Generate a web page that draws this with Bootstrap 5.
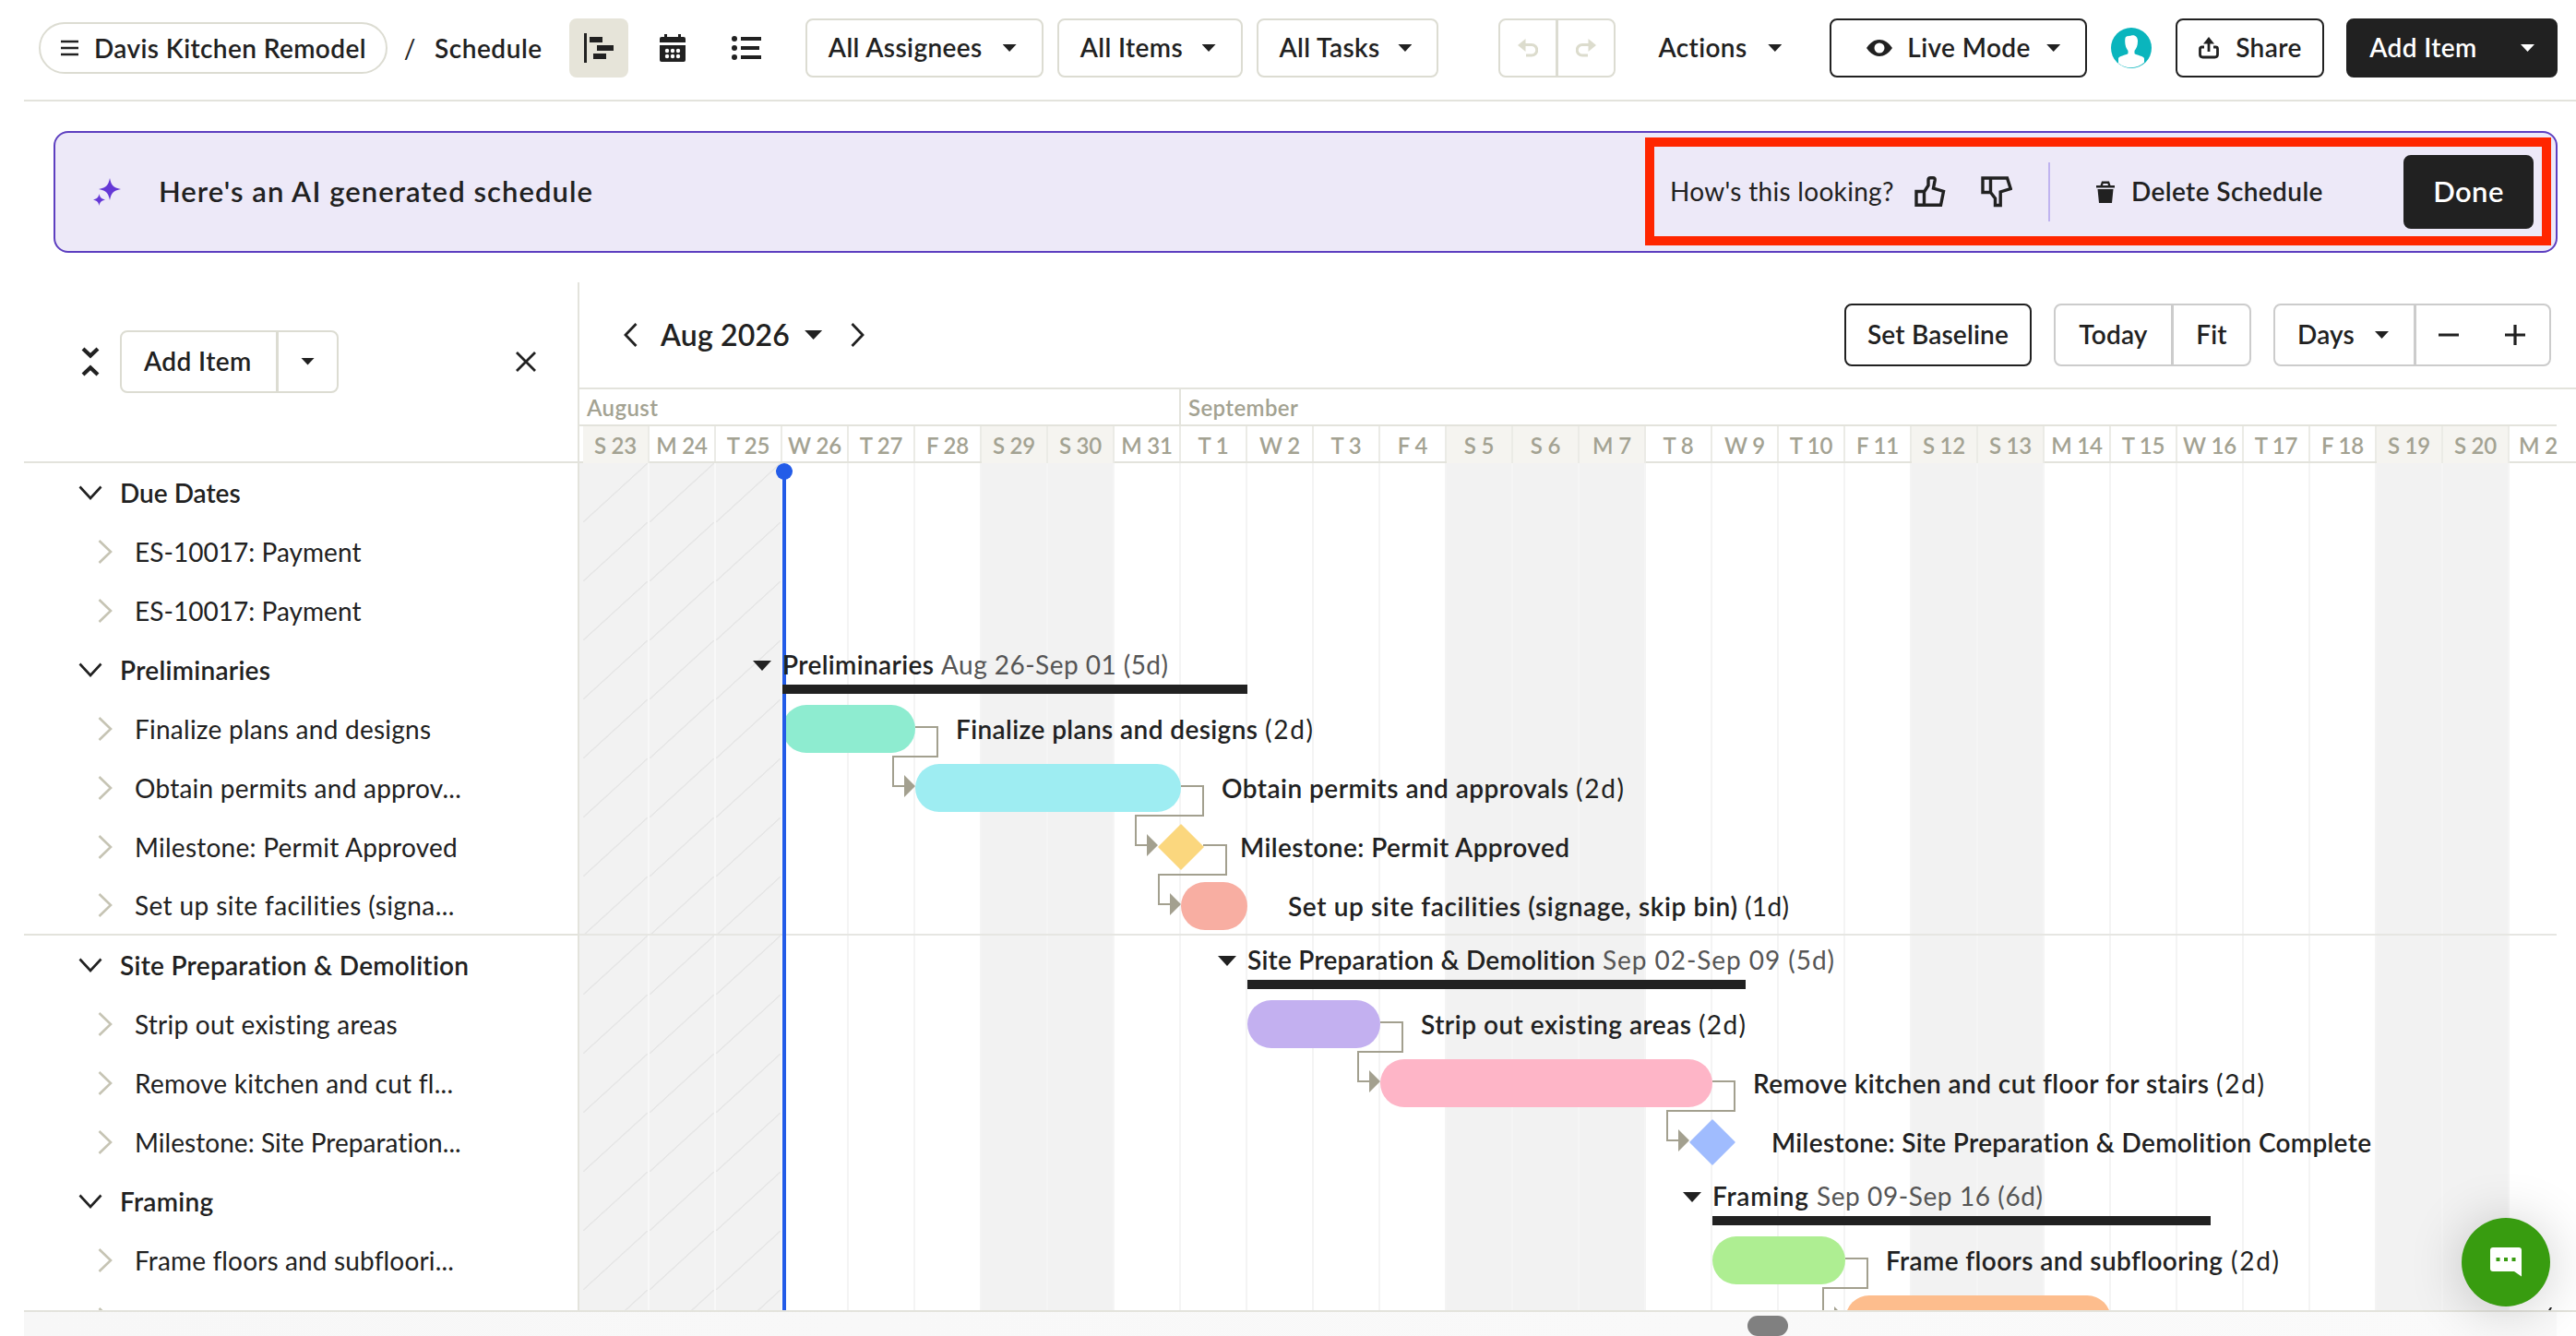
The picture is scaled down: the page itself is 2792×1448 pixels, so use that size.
<!DOCTYPE html>
<html lang="en">
<head>
<meta charset="utf-8">
<meta name="viewport" content="width=device-width, initial-scale=1">
<title>Davis Kitchen Remodel / Schedule</title>
<link rel="stylesheet" href="https://cdn.jsdelivr.net/npm/bootstrap@5.3.0/dist/css/bootstrap.min.css">
<script src="https://cdn.jsdelivr.net/npm/bootstrap@5.3.0/dist/js/bootstrap.bundle.min.js"></script>
<style>
:root{--ink:#212121;--line:#e3e3dc;--sand:#dcdcd2}
body{font-family:Lato,"Liberation Sans",sans-serif;font-size:28px;line-height:1.2;color:var(--ink);background:#fff;letter-spacing:.3px;font-variant-ligatures:none;width:2792px;height:1448px;overflow:hidden}
svg{display:block;flex:none}
.btn{--bs-btn-font-size:28px;--bs-btn-font-weight:600;--bs-btn-line-height:1.2;--bs-btn-padding-y:0;--bs-btn-padding-x:23px;--bs-btn-color:#212121;--bs-btn-border-width:2px;--bs-btn-border-radius:8px;height:64px;display:flex;align-items:center;white-space:nowrap;letter-spacing:.4px}
.btn-sand{--bs-btn-border-color:var(--sand);background:#fff}
.btn-gray{--bs-btn-border-color:#ccc;background:#fff}
.btn-ink{--bs-btn-border-color:var(--ink);background:#fff}
.btn-fill{--bs-btn-color:#fff;background:var(--ink);--bs-btn-border-color:var(--ink)}
.btn-group>.btn{flex:none}
.btn-group>.btn+.btn{margin-left:-2px}
.tri{width:15px;height:8px;background:currentColor;clip-path:polygon(0 0,100% 0,50% 100%);flex:none;margin-left:auto}
.topbar{height:110px;border-bottom:2px solid var(--line);margin-left:26px;padding:20px 20px 0 16px}
.pill{width:378px;height:56px;border:2px solid var(--sand);border-radius:28px;padding-left:22px;gap:17px;font-weight:600;letter-spacing:.4px;margin-top:4px}
.crumb{height:64px;font-weight:600;letter-spacing:.55px}
.viewbtn{width:64px;height:64px;border-radius:8px;display:flex;align-items:center;justify-content:center}
.viewbtn.on{background:#e6e4d9}
.aibar{margin:32px 20px 32px 58px;height:132px;border:2px solid #5d3fc0;border-radius:16px;background:#ede9f8;padding-left:41px}
.aititle{font-size:31px;font-weight:600;letter-spacing:1.05px;margin-left:41px}
.redbox{border:10px solid #ff2600;width:982px;height:117px;padding:0 9px 0 17px;margin:5px 5px 0 auto;align-self:flex-start}
.vr-lilac{width:2px;height:64px;background:#c0b4f0;margin-left:39px}
.btn-done{height:80px;width:141px;font-size:31px;justify-content:center;padding:0;letter-spacing:.4px}
.side{width:602px;margin-left:26px;border-right:2px solid var(--line)}
.sidehead{height:196px;border-bottom:2px solid var(--line);padding:23px 44px 46px 61px}
.board{height:1116px}
.rw{height:64px;padding-left:60px;white-space:nowrap;letter-spacing:.25px}
.rw.grp{font-weight:600;letter-spacing:.28px;padding-left:59px}
.rw.sub{padding-left:80px}
.rw.tight{letter-spacing:.04px}
.rw.cut{border-bottom:2px solid var(--line);letter-spacing:.4px}
.rw.grp svg{margin-right:19px}.rw.sub svg{margin-right:24px}
.rw span,.pill span,.crumb span{position:relative;top:1px}
.rows{height:918px;overflow:hidden}
.calhead{height:116px;border-bottom:2px solid var(--line);padding:0 27px 0 46px}
.calhead .btn{height:68px;letter-spacing:.2px}
.monthname{font-size:32px;font-weight:600;letter-spacing:.2px;margin:0 16px 0 24px}
.months{height:40px;margin-right:21px;border-bottom:2px solid var(--line);font-size:24px;font-weight:600;color:#a3a292;letter-spacing:.4px}
.months>div{padding:6px 0 0 8px}
.m-aug{width:652px;border-right:2px solid var(--line)}
.days{height:40px;width:2164px;padding-left:4px;overflow:hidden;background:linear-gradient(var(--line),var(--line)) 0 100%/100% 2px no-repeat;font-size:24px;font-weight:600;color:#a3a292;letter-spacing:-.2px}
.dayscell{flex:none;width:72px;border-right:2px solid #ebebe6;text-align:center;line-height:42px;height:38px}
.dayscell.off{background:#f5f4f0;height:40px}
.dayscell:last-child{padding-right:8px}
.dayclip{width:2143px;overflow:hidden}
.canvas{position:relative;height:918px;overflow:hidden}
.cols{padding-left:4px;width:2143px;height:918px;overflow:hidden}
.cols>i{flex:none;width:72px;border-right:2px solid #f4f4f4}
.cols>i.off{background:#f2f2f2;border-right-color:#f5f5f5}
.past{background:linear-gradient(to bottom right,transparent calc(50% - 1px),#e6e6e6 calc(50% - .5px),#e6e6e6 calc(50% + .5px),transparent calc(50% + 1px)) 0 0/70px 64px repeat-y #f2f2f2;border-right-color:#f8f8f8!important}
.lead-edge{position:absolute;left:0;top:0;width:4px;height:918px;background:#f2f2f2}
.chart{position:absolute;left:0;top:0}
.chart text{font-size:28px;font-weight:600;fill:#212121;letter-spacing:0}
.chart .n{font-weight:400}.chart .g{font-weight:400;fill:#555}
.foot{height:26px;margin:0 21px 0 26px;background:linear-gradient(90deg,#f7f7f7,#fafafa)}
.footline{height:2px;margin:-2px 0 0 26px;background:var(--line);position:relative}
.thumb{width:44px;height:22px;border-radius:11px;background:#808080;margin-left:1868px;position:relative;top:4px}
.chat{position:absolute;left:2668px;top:1320px;width:96px;height:96px;border-radius:50%;background:#389c10;box-shadow:0 4px 60px rgba(0,0,0,.2);display:flex;align-items:center;justify-content:center}
</style>
</head>
<body>
<svg width="0" height="0" class="position-absolute">
  <symbol id="down" viewBox="0 0 26 16"><path d="M1.5 1.5 13 14 24.500 1.500" fill="none" stroke="#212121" stroke-width="2.600"/></symbol>
  <symbol id="next" viewBox="0 0 16 26"><path d="M1.500 1 14 13 1.500 25" fill="none" stroke="#c6c4b4" stroke-width="2.600"/></symbol>
</svg>

<header class="topbar d-flex align-items-start">
  <div class="pill d-flex align-items-center">
    <svg width="19" height="18"><path d="M0 2h19M0 9h19M0 16h19" stroke="#212121" stroke-width="2.600"/></svg>
    <span>Davis Kitchen Remodel</span>
  </div>
  <div class="crumb d-flex align-items-center"><span style="margin-left:18px;font-weight:400">/</span><span style="margin-left:20px;width:146px">Schedule</span></div>
  <div class="viewbtn on"><svg width="32" height="32" fill="#212121"><path d="M0 0h3v32H0zM6 4h14v6H6zM14 13h18v6H14zM10 22h14v6H10z"/></svg></div>
  <div class="viewbtn" style="margin-left:16px"><svg width="28" height="30" viewBox="0 0 28 30" fill="#212121"><path d="M5 0h3v3h12V0h3v3h3a2 2 0 0 1 2 2v4H0V5a2 2 0 0 1 2-2h3z"/><path d="M0 12h28v16a2 2 0 0 1-2 2H2a2 2 0 0 1-2-2z"/><g fill="#fff"><circle cx="8" cy="18" r="2.200"/><circle cx="14" cy="18" r="2.200"/><circle cx="20" cy="18" r="2.200"/><circle cx="8" cy="24" r="2.200"/><circle cx="14" cy="24" r="2.200"/><circle cx="20" cy="24" r="2.200"/></g></svg></div>
  <div class="viewbtn" style="margin-left:16px"><svg width="32" height="26" fill="#212121"><circle cx="3" cy="3" r="3"/><circle cx="3" cy="13" r="3"/><circle cx="3" cy="23" r="3"/><path d="M10 1h22v4H10zM10 11h20v4H10zM10 21h22v4H10z"/></svg></div>
  <button class="btn btn-sand" style="width:258px;margin-left:32px;padding-right:27px">All Assignees<i class="tri"></i></button>
  <button class="btn btn-sand" style="width:201px;margin-left:15px;padding-right:27px">All Items<i class="tri"></i></button>
  <button class="btn btn-sand" style="width:198px;margin-left:15px;padding-right:27px">All Tasks<i class="tri"></i></button>
  <div class="btn-group" style="margin-left:65px">
    <button class="btn btn-sand p-0 justify-content-center" style="width:64px"><svg width="22" height="20" viewBox="0 0 22 20"><path d="M0 7 8.500 0v14z" fill="#dcdccd"/><path d="M7 6.500h8a5.500 5.500 0 0 1 0 11.500H9" fill="none" stroke="#dcdccd" stroke-width="3"/></svg></button>
    <button class="btn btn-sand p-0 justify-content-center" style="width:64px"><svg width="22" height="20" viewBox="0 0 22 20"><path d="M22 7 13.500 0v14z" fill="#dcdccd"/><path d="M15 6.500H7A5.500 5.500 0 0 0 7 18h6" fill="none" stroke="#dcdccd" stroke-width="3"/></svg></button>
  </div>
  <button class="btn border-0 p-0" style="width:134px;margin-left:46px">Actions<i class="tri"></i></button>
  <button class="btn btn-ink" style="width:279px;margin-left:52px;padding:0 27px 0 38px"><svg width="28" height="18" viewBox="0 0 28 18"><path fill="#212121" fill-rule="evenodd" d="M0 9C4 3 9 0 14 0s10 3 14 9c-4 6-9 9-14 9S4 15 0 9zm14-5.500a5.500 5.500 0 1 0 0 11 5.500 5.500 0 0 0 0-11z"/></svg><span style="margin-left:16px">Live Mode</span><i class="tri"></i></button>
  <svg width="44" height="44" viewBox="0 0 44 44" style="margin:10px 26px 0 26px"><circle cx="22" cy="22" r="22" fill="#0ab5bd"/><path fill="#fff" d="M15.500 11c1-2.500 4-1.500 6.500-2.500 4-1 7 1.500 7 6 0 5-1.500 8-3.500 10.500V28c2 2 10.500 2.500 10.500 5.500v4.300A22 22 0 0 1 8 38.500v-5c0-3 8-3.500 10.500-5.500v-3C16 22 14.500 17 15.500 11z"/></svg>
  <button class="btn btn-ink" style="width:161px"><svg width="22" height="24" viewBox="0 0 22 24"><path d="M11 0l6 7.500H5z" fill="#212121"/><path d="M11 5v11M6 11H3.500Q1.500 11 1.500 13v6q0 3 3 3h13q3 0 3-3v-6q0-2-2-2H16" fill="none" stroke="#212121" stroke-width="2.800"/></svg><span style="margin-left:18px">Share</span></button>
  <button class="btn btn-fill" style="width:229px;margin-left:24px">Add Item<i class="tri"></i></button>
</header>

<section class="aibar d-flex align-items-center">
  <svg width="30" height="30" viewBox="0 0 30 30" fill="#6538d6"><path d="M18 0c1.600 8 3.500 10 12 12-8.500 1.800-10.400 4-12 12-1.600-8-3.500-10.200-12-12 8.500-2 10.400-4 12-12z"/><path d="M6.500 17c.9 4 2 5.300 6.500 6.500-4.500 1-5.600 2.500-6.500 6.500-.9-4-2-5.500-6.500-6.500 4.500-1.200 5.600-2.500 6.500-6.500z"/></svg>
  <div class="aititle">Here's an AI generated schedule</div>
  <div class="redbox d-flex align-items-center">
    <span style="width:265px">How's this looking?</span>
    <svg width="34" height="34" viewBox="0 0 34 34" fill="none" stroke="#212121" stroke-width="3.400"><path d="M2 16.500h8.500v14.800H2zM10.500 17 15 10V4q0-2.300 2.300-2.300H20q2.600 0 2.200 2.600L20.500 13 31.500 16.500 28.500 31.300h-18"/></svg>
    <svg width="34" height="34" viewBox="0 0 34 34" fill="none" stroke="#212121" stroke-width="3.400" style="margin-left:38px"><path d="M2 2h8.500v15.500H2zM10.500 17.500 15.500 24v7.500h5.700V17l11-3.500L28.500 2h-18"/></svg>
    <i class="vr-lilac"></i>
    <svg width="20" height="24" viewBox="0 0 20 24" fill="#212121" style="margin-left:50px"><path d="M0 5h4.500L6 0.500h8L15.500 5H20v2.500H0zm7 0h6l-.6-2H7.600zM1.500 9h17l-1.500 15H3z" fill-rule="evenodd"/></svg>
    <span style="margin-left:18px;font-weight:600;letter-spacing:.4px" class="text-nowrap">Delete Schedule</span>
    <button class="btn btn-fill btn-done ms-auto">Done</button>
  </div>
</section>

<main class="board d-flex">
  <aside class="side flex-shrink-0">
    <div class="sidehead d-flex align-items-center">
      <svg width="22" height="32" viewBox="0 0 22 32" fill="none" stroke="#212121" stroke-width="4.200"><path d="M3 2l8 7.500L19 2M3 30l8-7.500L19 30"/></svg>
      <div class="btn-group" style="margin-left:21px">
        <button class="btn btn-sand" style="width:171px;height:68px;padding:0 0 0 24px">Add Item</button>
        <button class="btn btn-sand p-0" style="width:67px;height:68px"><i class="tri mx-auto"></i></button>
      </div>
      <svg width="24" height="24" viewBox="0 0 24 24" class="ms-auto"><path d="M2 2l20 20M22 2 2 22" stroke="#212121" stroke-width="2.800"/></svg>
    </div>
    <div class="rows">
      <div class="rw grp d-flex align-items-center"><svg width="26" height="16"><use href="#down"/></svg><span style="letter-spacing:0">Due Dates</span></div>
      <div class="rw sub tight d-flex align-items-center"><svg width="16" height="26"><use href="#next"/></svg><span>ES-10017: Payment</span></div>
      <div class="rw sub tight d-flex align-items-center"><svg width="16" height="26"><use href="#next"/></svg><span>ES-10017: Payment</span></div>
      <div class="rw grp d-flex align-items-center"><svg width="26" height="16"><use href="#down"/></svg><span>Preliminaries</span></div>
      <div class="rw sub d-flex align-items-center"><svg width="16" height="26"><use href="#next"/></svg><span>Finalize plans and designs</span></div>
      <div class="rw sub d-flex align-items-center"><svg width="16" height="26"><use href="#next"/></svg><span>Obtain permits and approv...</span></div>
      <div class="rw sub d-flex align-items-center"><svg width="16" height="26"><use href="#next"/></svg><span>Milestone: Permit Approved</span></div>
      <div class="rw sub cut d-flex align-items-center"><svg width="16" height="26"><use href="#next"/></svg><span>Set up site facilities (signa...</span></div>
      <div class="rw grp d-flex align-items-center"><svg width="26" height="16"><use href="#down"/></svg><span>Site Preparation &amp; Demolition</span></div>
      <div class="rw sub d-flex align-items-center"><svg width="16" height="26"><use href="#next"/></svg><span>Strip out existing areas</span></div>
      <div class="rw sub d-flex align-items-center"><svg width="16" height="26"><use href="#next"/></svg><span>Remove kitchen and cut fl...</span></div>
      <div class="rw sub tight d-flex align-items-center"><svg width="16" height="26"><use href="#next"/></svg><span>Milestone: Site Preparation...</span></div>
      <div class="rw grp d-flex align-items-center"><svg width="26" height="16"><use href="#down"/></svg><span>Framing</span></div>
      <div class="rw sub d-flex align-items-center"><svg width="16" height="26"><use href="#next"/></svg><span style="letter-spacing:.15px">Frame floors and subfloori...</span></div>
      <div class="rw sub d-flex align-items-center"><svg width="16" height="26"><use href="#next"/></svg></div>
    </div>
  </aside>

  <section class="flex-grow-1" style="width:2164px">
    <div class="calhead d-flex align-items-center">
      <svg width="18" height="28" viewBox="0 0 18 28"><path d="M15.500 2 4 14l11.500 12" fill="none" stroke="#212121" stroke-width="2.800"/></svg>
      <span class="monthname">Aug 2026</span>
      <i class="tri m-0" style="width:19px;height:10px"></i>
      <svg width="18" height="28" viewBox="0 0 18 28" style="margin-left:30px"><path d="M2.500 2 14 14 2.500 26" fill="none" stroke="#212121" stroke-width="2.800"/></svg>
      <button class="btn btn-ink ms-auto justify-content-center px-0" style="width:203px">Set Baseline</button>
      <div class="btn-group" style="margin-left:24px">
        <button class="btn btn-gray justify-content-center px-0" style="width:129px">Today</button>
        <button class="btn btn-gray justify-content-center px-0" style="width:86px">Fit</button>
      </div>
      <div class="btn-group" style="margin-left:24px">
        <button class="btn btn-gray" style="width:154px;padding:0 27px 0 24px">Days<i class="tri"></i></button>
        <button class="btn btn-gray p-0" style="width:148px"><svg width="144" height="24"><path d="M24 12h22M96 12h22M107 1v22" stroke="#212121" stroke-width="3.200"/></svg></button>
      </div>
    </div>
    <div class="months d-flex"><div class="m-aug">August</div><div>September</div></div>
    <div class="days"><div class="dayclip d-flex" id="dayrow"></div></div>
    <div class="canvas">
      <div class="cols d-flex" id="colrow"></div>
      <i class="lead-edge"></i>
      <svg class="chart" width="2143" height="918" viewBox="628 502 2143 918">
        <path d="M628 1013H2771" stroke="#e6e6e2" stroke-width="2"/>
        <rect x="848" y="764" width="144" height="52" rx="26" fill="#8eecd0"/>
        <rect x="992" y="828" width="288" height="52" rx="26" fill="#9eedf2"/>
        <path d="M1280 894l24 24-24 24-24-24z" fill="#fbd77e" stroke="#fbd77e" stroke-width="1.500" stroke-linejoin="round"/>
        <rect x="1280" y="956" width="72" height="52" rx="26" fill="#f8aea2"/>
        <rect x="1352" y="1084" width="144" height="52" rx="26" fill="#c3b0f0"/>
        <rect x="1496" y="1148" width="360" height="52" rx="26" fill="#feb5c7"/>
        <path d="M1856 1214l24 24-24 24-24-24z" fill="#a0bcfe" stroke="#a0bcfe" stroke-width="1.500" stroke-linejoin="round"/>
        <rect x="1856" y="1340" width="144" height="52" rx="26" fill="#aeee92"/>
        <rect x="2000" y="1404" width="288" height="52" rx="26" fill="#fdbd8d"/>
        <g fill="none" stroke="#a3a08f" stroke-width="2">
          <path d="M992 788h24v32h-48v32h13"/>
          <path d="M1280 852h24v32h-73v32h13"/>
          <path d="M1304 916h25v32h-73v32h13"/>
          <path d="M1496 1108h24v32h-48v32h13"/>
          <path d="M1856 1172h24v32h-73v32h13"/>
          <path d="M2000 1364h24v32h-48v32h13"/>
        </g>
        <g fill="#a3a08f">
          <path d="M980 840l12 12-12 12zM1243 904l12 12-12 12zM1268 968l12 12-12 12zM1484 1160l12 12-12 12zM1819 1224l12 12-12 12zM1988 1416l12 12-12 12z"/>
        </g>
        <path d="M850 511V1420" stroke="#235ce8" stroke-width="4"/><circle cx="850" cy="511" r="9" fill="#235ce8"/>
        <g fill="#212121">
          <path d="M816 716h20l-10 11zM1320 1036h20l-10 11zM1824 1292h20l-10 11z"/>
          <path d="M848 742h504v10H848zM1352 1062h540v10h-540zM1856 1318h540v10h-540z"/>
          <path d="M2762 1420l2-3h2l-1.500 3z"/>
        </g>
        <text x="848" y="731" textLength="164">Preliminaries</text><text class="g" x="1020" y="731" textLength="246">Aug 26-Sep 01 (5d)</text>
        <text x="1036" y="801" textLength="327">Finalize plans and designs</text><text class="n" x="1371" y="801" textLength="52">(2d)</text>
        <text x="1324" y="865" textLength="376">Obtain permits and approvals</text><text class="n" x="1708" y="865" textLength="52">(2d)</text>
        <text x="1344" y="929" textLength="357">Milestone: Permit Approved</text>
        <text x="1396" y="993" textLength="487">Set up site facilities (signage, skip bin)</text><text class="n" x="1891" y="993" textLength="48">(1d)</text>
        <text x="1352" y="1051" textLength="377">Site Preparation &amp; Demolition</text><text class="g" x="1737" y="1051" textLength="251">Sep 02-Sep 09 (5d)</text>
        <text x="1540" y="1121" textLength="293">Strip out existing areas</text><text class="n" x="1841" y="1121" textLength="51">(2d)</text>
        <text x="1900" y="1185" textLength="494">Remove kitchen and cut floor for stairs</text><text class="n" x="2402" y="1185" textLength="52">(2d)</text>
        <text x="1920" y="1249" textLength="650">Milestone: Site Preparation &amp; Demolition Complete</text>
        <text x="1856" y="1307" textLength="104">Framing</text><text class="g" x="1969" y="1307" textLength="245">Sep 09-Sep 16 (6d)</text>
        <text x="2044" y="1377" textLength="365">Frame floors and subflooring</text><text class="n" x="2418" y="1377" textLength="52">(2d)</text>
      </svg>
    </div>
  </section>
</main>
<div class="footline"></div>
<footer class="foot"><div class="thumb"></div></footer>

<div class="chat"><svg width="34" height="32" viewBox="0 0 34 32"><path d="M3 0h28a3 3 0 0 1 3 3v28.500L26 26H3a3 3 0 0 1-3-3V3a3 3 0 0 1 3-3z" fill="#fff"/><path d="M6.500 11h4v4h-4zM15 11h4v4h-4zM23.500 11h4v4h-4z" fill="#389c10"/></svg></div>

<script>
// Calendar columns: weekends and Labor Day are shaded, days before today are hatched
const days = "S 23,M 24,T 25,W 26,T 27,F 28,S 29,S 30,M 31,T 1,W 2,T 3,F 4,S 5,S 6,M 7,T 8,W 9,T 10,F 11,S 12,S 13,M 14,T 15,W 16,T 17,F 18,S 19,S 20,M 2".split(",");
const shaded = new Set(["M 7"]);
days.forEach((d, i) => {
  const off = d[0] === "S" || shaded.has(d);
  const h = document.createElement("div");
  h.className = "dayscell" + (off ? " off" : "");
  h.textContent = d;
  dayrow.append(h);
  const c = document.createElement("i");
  c.className = i < 3 ? "past" : off ? "off" : "";
  colrow.append(c);
});
</script>
</body>
</html>
